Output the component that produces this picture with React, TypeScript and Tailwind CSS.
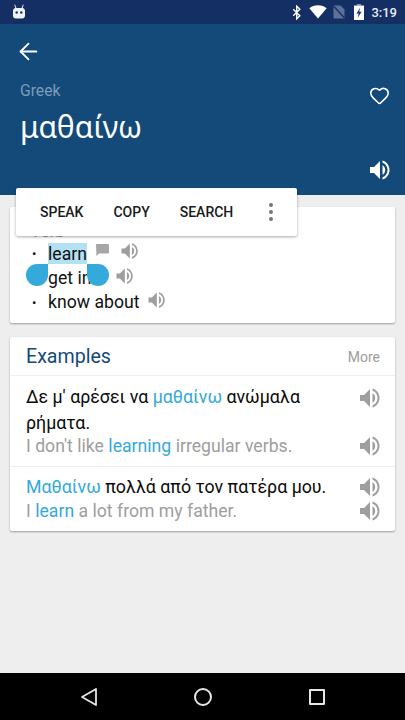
import { ArrowLeft, Heart } from "lucide-react";

function Speaker({ className }: { className: string }) {
  return (
    <svg viewBox="0 0 24 24" className={className} fill="currentColor">
      <path d="M3 9v6h4l6 6V3L7 9H3z" />
      <path d="M15.5 7.2v9.6c1.6-.8 2.7-2.6 2.7-4.8s-1.1-4-2.7-4.8z" />
      <path d="M15.5 2.6v2.2c2.9.9 5 3.8 5 7.2s-2.1 6.3-5 7.2v2.2c4-1 7-4.9 7-9.4s-3-8.4-7-9.4z" />
    </svg>
  );
}

function StatusBar() {
  return (
    <div className="h-6 bg-[#132f63] flex items-center pl-3 pr-2 text-white">
      <svg viewBox="0 0 14 15" className="w-[14px] h-[15px] -mt-[1px] text-[#f2f2f2]" fill="currentColor">
        <path d="M3 0.500l1.500 3.500h5L11 0.500l.7.3L10.600 4c1.300.3 2.400 1.300 2.400 2.800v5c0 1.500-1.200 2.700-2.700 2.700H3.700C2.200 14.500 1 13.300 1 11.800v-5C1 5.300 2.100 4.300 3.400 4L2.300 0.800z" />
        <circle cx="4.700" cy="8.500" r="1.200" fill="#132f63" />
        <circle cx="9.300" cy="8.500" r="1.200" fill="#132f63" />
      </svg>
      <div className="ml-auto flex items-center">
        <svg viewBox="0 0 10 16" className="w-[10px] h-[15px]" fill="none" stroke="currentColor" strokeWidth="1.500">
          <path d="M1 4.500l7 7-3.300 3.300V1.200L8 4.500l-7 7" />
        </svg>
        <svg viewBox="0 0 18 14" className="w-[18px] h-[14px] ml-[7px]" fill="currentColor">
          <path d="M9 13.500L0.300 3.200C2.500 1.300 5.600 0.300 9 0.300s6.500 1 8.700 2.900z" />
        </svg>
        <svg viewBox="0 0 12 14" className="w-[12px] h-[14px] ml-[6px]">
          <path d="M0.500 0.500h7l4 4v9h-11z" fill="#5d7296" />
          <path d="M0.500 1L11.500 13" stroke="#132f63" strokeWidth="1.200" />
        </svg>
        <svg viewBox="0 0 10 16" className="w-[10px] h-[16px] ml-[9px]" fill="currentColor">
          <path d="M3 0h4v1.500H3z" fill="#8c9ab3" />
          <path d="M0 1.500h10V16H0z" />
          <path d="M6.300 3.500L2.500 9.500h2.200L3.700 14l3.800-6.200H5.200z" fill="#132f63" />
        </svg>
        <span className="ml-[7px] text-[13px] leading-none font-medium text-[#e9edf3]">3:19</span>
      </div>
    </div>
  );
}

function Header() {
  return (
    <div className="h-[171px] bg-[#134a7a] relative pl-5 pr-[14px] pt-[15px] flex justify-between text-white">
      <div className="flex flex-col">
        <ArrowLeft size={27} strokeWidth={1.6} className="-ml-[5px] -mt-[1px]" />
        <div className="mt-4 text-[15.700px] leading-5 text-[#7d9cbb]">Greek</div>
        <div className="mt-[6px] text-[30px] leading-10 font-['Noto_Sans',sans-serif]">μαθαίνω</div>
      </div>
      <div className="flex flex-col items-center">
        <Heart size={21} strokeWidth={1.8} className="mt-[46px]" />
        <Speaker className="w-[24px] h-[24px] mt-[52px]" />
      </div>
    </div>
  );
}

function Sense({ word, speakerGap, children }: { word: React.ReactNode; speakerGap: string; children?: React.ReactNode }) {
  return (
    <div className="h-[24.500px] flex items-center text-[17.650px] text-[#111]">
      <span className="w-[38px] pl-[22px] text-[13px]">•</span>
      {word}
      {children}
      <Speaker className={`w-[20px] h-[20px] text-[#9e9e9e] -mt-[4px] ${speakerGap}`} />
    </div>
  );
}

function MeaningCard() {
  return (
    <div className="mx-[10px] mt-3 h-[116px] bg-white rounded-[2px] shadow-[0_1px_2px_rgba(0,0,0,0.35)] relative pt-[14px]">
      <div className="h-5 pl-5 text-[17px] leading-5 text-[#9e9e9e]">Verb</div>
      <Sense
        word={<span className="bg-[#b3e0f2] h-[21px] leading-[22px] w-[39px]">learn</span>}
        speakerGap="ml-[10px]"
      >
        <svg viewBox="0 0 13 12" className="w-[13px] h-[12px] text-[#a6a6a6] ml-[9px] -mt-[7px]" fill="currentColor">
          <path d="M1 0h11a1 1 0 0 1 1 1v7.500a1 1 0 0 1-1 1H3L0.500 12 0 1a1 1 0 0 1 1-1z" />
        </svg>
      </Sense>
      <Sense word={<span>get into</span>} speakerGap="ml-[7px]" />
      <Sense word={<span>know about</span>} speakerGap="ml-[7px]" />
      {/* selection handles */}
      <div className="absolute left-[16px] top-[57px] w-[22px] h-[22px] bg-[#33a9dc] rounded-full rounded-tr-none" />
      <div className="absolute left-[77px] top-[57px] w-[22px] h-[22px] bg-[#33a9dc] rounded-full rounded-tl-none" />
    </div>
  );
}

function FloatingToolbar() {
  return (
    <div className="absolute left-4 top-[188px] w-[281px] h-[48px] bg-white rounded-[2px] shadow-[0_1px_3px_rgba(0,0,0,0.35)] flex items-center pl-6 text-[14px] font-medium text-[#1a1a1a]">
      <span>SPEAK</span>
      <span className="ml-[30px]">COPY</span>
      <span className="ml-[30px]">SEARCH</span>
      <div className="ml-[36px] flex flex-col gap-[3px]">
        <span className="w-1 h-1 rounded-full bg-[#757575]" />
        <span className="w-1 h-1 rounded-full bg-[#757575]" />
        <span className="w-1 h-1 rounded-full bg-[#757575]" />
      </div>
    </div>
  );
}

function Hl({ children }: { children: React.ReactNode }) {
  return <span className="text-[#33a9dc]">{children}</span>;
}

function ExamplesCard() {
  const icon = "w-[24px] h-[24px] text-[#9e9e9e] shrink-0";
  return (
    <div className="mx-[10px] mt-[14px] h-[194px] bg-white rounded-[2px] shadow-[0_1px_2px_rgba(0,0,0,0.35)]">
      <div className="h-[39px] border-b border-[#eeeeee] flex items-center justify-between pl-4 pr-[15px]">
        <span className="text-[19.600px] text-[#134a7a] mt-[1px]">Examples</span>
        <span className="text-[14px] text-[#9e9e9e] mt-[2px]">More</span>
      </div>
      <div className="h-[91px] border-b border-[#eeeeee] pl-4 pr-[14px] pt-2 text-[17.650px] leading-[26px]">
        <div className="flex justify-between h-[50px]">
          <div className="w-[310px] text-[17.800px] text-[#0a0a0a]">
            Δε μ' αρέσει να <Hl>μαθαίνω</Hl> ανώμαλα ρήματα.
          </div>
          <Speaker className={`${icon} mt-[2px]`} />
        </div>
        <div className="flex justify-between items-center h-[24px] text-[#9e9e9e]">
          <div>
            I don't like <Hl>learning</Hl> irregular verbs.
          </div>
          <Speaker className={icon} />
        </div>
      </div>
      <div className="pl-4 pr-[14px] pt-2 text-[17.650px]">
        <div className="flex justify-between items-center h-6 text-[#0a0a0a]">
          <div className="text-[17.800px]">
            <Hl>Μαθαίνω</Hl> πολλά από τον πατέρα μου.
          </div>
          <Speaker className={icon} />
        </div>
        <div className="flex justify-between items-center h-6 text-[#9e9e9e]">
          <div>
            I <Hl>learn</Hl> a lot from my father.
          </div>
          <Speaker className={icon} />
        </div>
      </div>
    </div>
  );
}

function NavBar() {
  return (
    <div className="h-[47px] bg-black flex items-center text-[#e6e6e6]">
      <svg viewBox="0 0 18 20" className="w-[18px] h-[20px] ml-[80px]" fill="none" stroke="currentColor" strokeWidth="1.800" strokeLinejoin="round">
        <path d="M16 2v16L2 10z" />
      </svg>
      <div className="w-[18px] h-[18px] rounded-full border-2 border-current ml-[96px]" />
      <div className="w-4 h-4 rounded-[1px] border-2 border-current ml-[97px]" />
    </div>
  );
}

export default function App() {
  return (
    <div className="w-[405px] h-[720px] bg-[#eeeeee] flex flex-col relative overflow-hidden font-['Roboto',sans-serif]">
      <StatusBar />
      <Header />
      <MeaningCard />
      <ExamplesCard />
      <div className="flex-1" />
      <NavBar />
      <FloatingToolbar />
    </div>
  );
}
